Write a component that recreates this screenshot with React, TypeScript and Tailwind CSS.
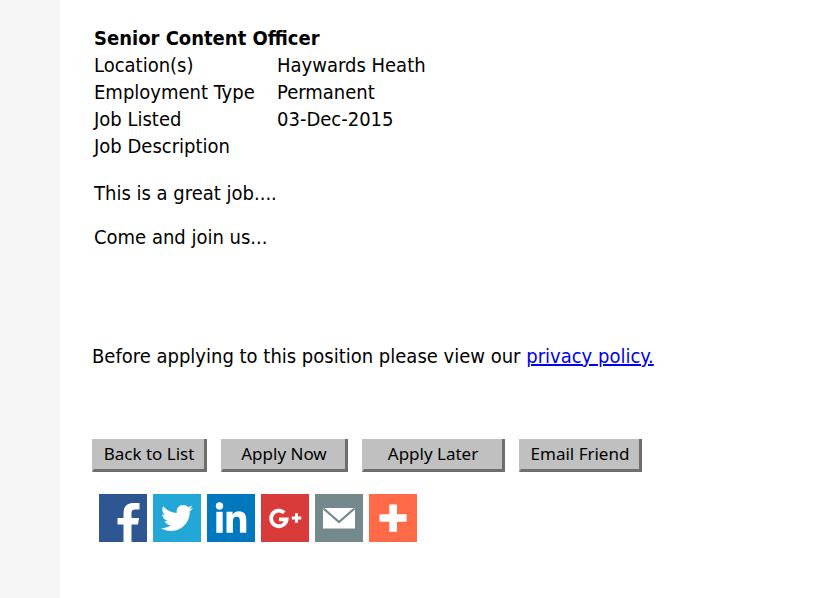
import type { ReactNode } from "react";
import { FaTwitter } from "react-icons/fa";

const details = [
  { label: "Location(s)", value: "Haywards Heath" },
  { label: "Employment Type", value: "Permanent" },
  { label: "Job Listed", value: "03-Dec-2015" },
  { label: "Job Description", value: "" },
];

const actions = [
  { label: "Back to List", width: "w-[115px]" },
  { label: "Apply Now", width: "w-[127px]" },
  { label: "Apply Later", width: "w-[143px]" },
  { label: "Email Friend", width: "w-[123px]" },
];

function FacebookIcon() {
  return (
    <svg viewBox="0 0 48 48" className="size-12" fill="#fff" aria-hidden>
      <path d="M24.500 48V30.500h-6V24h6v-4.500c0-7 3.500-10.500 10-10.500h6v6.500h-4c-3 0-4 1-4 3.500V24H40l-1 6.500h-6.500V48z" />
    </svg>
  );
}

function LinkedInIcon() {
  return (
    <svg viewBox="0 0 48 48" className="size-12" fill="#fff" aria-hidden>
      <circle cx="12.500" cy="12" r="3.700" />
      <path d="M9.300 17.800h6.400v21H9.300z" />
      <path d="M19.500 17.800h6.100v2.900c1.200-2.100 3.300-3.400 6.200-3.400 5.800 0 7.500 3.700 7.500 9.100v12.400h-6.400V27.600c0-2.900-.6-4.900-3.300-4.900-2.800 0-3.700 2.100-3.700 4.900v11.200h-6.400z" />
    </svg>
  );
}

function GooglePlusIcon() {
  return (
    <svg viewBox="0 0 48 48" className="size-12" fill="none" stroke="#fff" aria-hidden>
      <path d="M23.300 18.700A7.800 7.800 0 1 0 25.700 25.300H18" strokeWidth="3.800" />
      <path d="M35.500 19.300v9.400M30.800 24h9.400" strokeWidth="3" />
    </svg>
  );
}

function MailIcon() {
  return (
    <svg viewBox="0 0 48 48" className="size-12" aria-hidden>
      <path d="M8 14h32v20.500H8z" fill="#fff" />
      <path d="M8.500 14.500L24 28l15.500-13.500" fill="none" stroke="#73898c" strokeWidth="2.200" />
    </svg>
  );
}

function PlusIcon() {
  return (
    <svg viewBox="0 0 48 48" className="size-12" fill="#fff" aria-hidden>
      <path d="M20.300 10.500h7.700v9.700h9.700v7.600H28v9.900h-7.700v-9.900h-9.800v-7.600h9.800z" />
    </svg>
  );
}

function ShareLink({ label, color, children }: { label: string; color: string; children: ReactNode }) {
  return (
    <a href="#" aria-label={label} className={`flex size-12 items-center justify-center text-white ${color}`}>
      {children}
    </a>
  );
}

export default function App() {
  return (
    <div className="flex min-h-screen bg-white font-['DejaVu_Sans_Condensed','DejaVu_Sans',sans-serif] text-[20px] leading-[27px] text-black">
      <aside className="w-[60px] shrink-0 bg-[#f6f6f6]" />
      <main className="min-w-0 flex-1 px-8 pt-[25px] pb-14">
        <div className="pl-[2px]">
          <h1 className="font-bold">Senior Content Officer</h1>
          <table className="border-collapse text-left">
            <tbody>
              {details.map((row) => (
                <tr key={row.label}>
                  <th scope="row" className="w-[183px] p-0 font-normal">
                    {row.label}
                  </th>
                  <td className="p-0">{row.value}</td>
                </tr>
              ))}
            </tbody>
          </table>

          <div className="mt-5 space-y-[17px]">
            <p>This is a great job....</p>
            <p>Come and join us...</p>
          </div>
        </div>

        <p className="mt-[92px]">
          Before applying to this position please view our{" "}
          <a href="#" className="text-[#0000ee] underline">
            privacy policy.
          </a>
        </p>

        <div className="mt-[69px] flex flex-wrap gap-[14px]">
          {actions.map((action) => (
            <button
              key={action.label}
              type="button"
              className={`h-[33px] border-r-3 border-b-3 border-l-2 border-[#6e6e6e] border-l-[#c0c0c0] bg-[#c0c0c0] font-['Noto_Sans',sans-serif] text-[17px] leading-6 whitespace-nowrap ${action.width}`}
            >
              {action.label}
            </button>
          ))}
        </div>

        <div className="mt-[22px] flex flex-wrap gap-[6px] pl-[7px]">
          <ShareLink label="Facebook" color="bg-[#2d5693]">
            <FacebookIcon />
          </ShareLink>
          <ShareLink label="Twitter" color="bg-[#22a7d6]">
            <FaTwitter className="size-8" />
          </ShareLink>
          <ShareLink label="LinkedIn" color="bg-[#0078bd]">
            <LinkedInIcon />
          </ShareLink>
          <ShareLink label="Google+" color="bg-[#d93a3a]">
            <GooglePlusIcon />
          </ShareLink>
          <ShareLink label="Email" color="bg-[#73898c]">
            <MailIcon />
          </ShareLink>
          <ShareLink label="More" color="bg-[#ff6a48]">
            <PlusIcon />
          </ShareLink>
        </div>
      </main>
    </div>
  );
}
